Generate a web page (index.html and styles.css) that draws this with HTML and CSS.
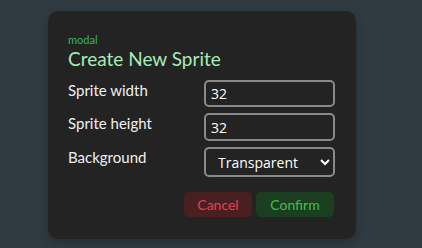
FILE: index.html
```html
<!DOCTYPE html>
<html lang="en">
<head>
    <meta charset="UTF-8">
    <title>Create New Sprite</title>
    <link rel="stylesheet" href="styles.css">
</head>
<body>
    <div class="modal">
        <div class="tag">modal</div>
        <h2 class="title">Create New Sprite</h2>
        <div class="form">
            <label for="w">Sprite width</label>
            <input type="text" id="w" value="32">
            <label for="h">Sprite height</label>
            <input type="text" id="h" value="32">
            <label for="bg">Background</label>
            <select id="bg">
                <option>Transparent</option>
                <option>White</option>
                <option>Black</option>
            </select>
        </div>
        <div class="actions">
            <button class="btn cancel">Cancel</button>
            <button class="btn confirm">Confirm</button>
        </div>
    </div>
</body>
</html>
```

FILE: styles.css
```css
body {
    margin: 0;
    height: 248px;
    background-color: #2f3a41;
    font-family: Lato, "Open Sans", sans-serif;
    overflow: hidden;
}

.modal {
    box-sizing: border-box;
    width: 308px;
    height: 228px;
    margin: 11px 0 0 48px;
    padding: 23px 21px 0 20px;
    background-color: #232323;
    border-radius: 10px;
    box-shadow: 0 4px 10px rgba(0, 0, 0, 0.2);
}

.tag {
    font-size: 11px;
    line-height: 12px;
    color: #39b361;
}

.title {
    margin: 1px 0 9px;
    font-size: 19px;
    line-height: 24px;
    font-weight: normal;
    color: #a4ecb4;
}

.form {
    display: grid;
    grid-template-columns: 136px 131px;
    row-gap: 6px;
    align-items: start;
}

.form label {
    color: #f0f0f0;
    font-size: 15px;
    line-height: 20px;
}

.form input,
.form select {
    box-sizing: border-box;
    width: 131px;
    height: 27px;
    background-color: #232323;
    color: #ffffff;
    border: 2px solid #8a8a8a;
    border-radius: 5px;
    font-family: "Open Sans", sans-serif;
    font-size: 14px;
    padding: 0 5px;
    outline: none;
}

.form #h {
    height: 28px;
}

.form select {
    height: 30px;
    padding: 0 4px 0 8px;
}

.actions {
    display: flex;
    justify-content: flex-end;
    gap: 4px;
    margin: 15px 1px 0 0;
}

.btn {
    height: 25px;
    border: none;
    border-radius: 5px;
    font-family: Lato, sans-serif;
    font-size: 14px;
    cursor: pointer;
}

.cancel {
    width: 68px;
    background-color: #4a1f21;
    color: #e0454c;
}

.confirm {
    width: 78px;
    background-color: #1b3d20;
    color: #3fc04d;
}
```
